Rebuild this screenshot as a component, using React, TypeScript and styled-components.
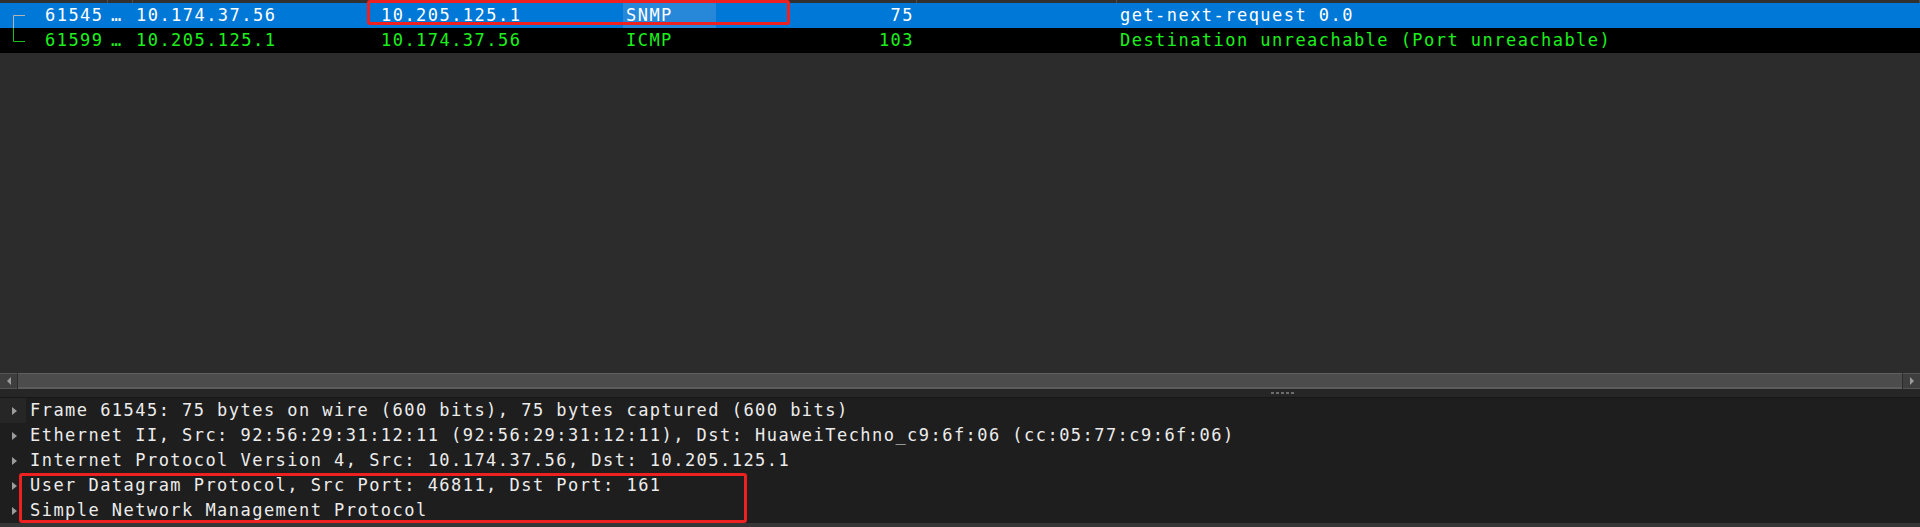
import React from "react";
import styled, { createGlobalStyle } from "styled-components";

const Global = createGlobalStyle`
  html, body { margin: 0; padding: 0; background: #2c2c2c; overflow: hidden; }
  #root { width: 1920px; height: 527px; }
`;

const MONO = `"DejaVu Sans Mono", "Liberation Mono", monospace`;
const COLS = "108px 25px 245px 245px 93px 201px 200px 1fr";

const Window = styled.div`
  position: relative;
  width: 1920px;
  height: 527px;
  display: flex;
  flex-direction: column;
  background: #2c2c2c;
  font-family: ${MONO};
  font-size: 17px;
  letter-spacing: 1.46px;
  overflow: hidden;
`;

const PacketList = styled.div`
  flex: 1;
  display: flex;
  flex-direction: column;
  min-height: 0;
`;

const HeaderStrip = styled.div`
  height: 3px;
  flex: none;
  display: grid;
  grid-template-columns: ${COLS};
  background: #303030;
`;

const HeaderCell = styled.div`
  border-right: 1px solid #4e4e4e;
`;

const PacketRow = styled.div<{ $selected?: boolean }>`
  height: 25px;
  flex: none;
  display: grid;
  grid-template-columns: ${COLS};
  background: ${(p) => (p.$selected ? "#0078d7" : "#000000")};
  color: ${(p) => (p.$selected ? "#ffffff" : "#1cf01c")};
  line-height: 25px;
`;

const Cell = styled.div<{ $right?: boolean; $hot?: boolean }>`
  overflow: hidden;
  white-space: nowrap;
  padding: 0 3px 0 3px;
  text-align: ${(p) => (p.$right ? "right" : "left")};
  background: ${(p) => (p.$hot ? "#2787d9" : "transparent")};
`;

const NoCell = styled.div`
  display: flex;
  align-items: stretch;
  padding-left: 12px;
  white-space: nowrap;
  overflow: hidden;
`;

const TreeGlyph = styled.svg`
  flex: none;
  width: 14px;
  height: 25px;
  margin-right: 19px;
`;

const EmptyArea = styled.div`
  flex: 1;
  background: #2c2c2c;
`;

const HScroll = styled.div`
  height: 16px;
  flex: none;
  display: flex;
  background: #2c2c2c;
`;

const ArrowButton = styled.div`
  width: 17px;
  flex: none;
  display: flex;
  align-items: center;
  justify-content: center;
  background: #3e3e3e;
  border-top: 1px solid #555555;
  border-bottom: 1px solid #555555;
`;

const Arrow = styled.span<{ $dir: "left" | "right" }>`
  width: 0;
  height: 0;
  border-top: 4px solid transparent;
  border-bottom: 4px solid transparent;
  ${(p) =>
    p.$dir === "left"
      ? "border-right: 4px solid #9a9a9a;"
      : "border-left: 4px solid #9a9a9a;"}
`;

const Thumb = styled.div`
  flex: 1;
  margin: 0 1px;
  background: #4c4c4c;
  border-top: 1px solid #606060;
  border-bottom: 2px solid #5c5c5c;
`;

const Splitter = styled.div`
  height: 8px;
  flex: none;
  display: flex;
  align-items: center;
  background: #262626;
  border-bottom: 1px solid #171717;
`;

const Grip = styled.div`
  margin-left: 1271px;
  display: flex;
  gap: 2px;
`;

const GripDot = styled.span`
  width: 3px;
  height: 2px;
  background: #6c6c6c;
`;

const DetailPane = styled.div`
  height: 125px;
  flex: none;
  display: flex;
  flex-direction: column;
  background: #1e1e1e;
  color: #ececec;
`;

const TreeRow = styled.div`
  height: 25px;
  display: flex;
  align-items: stretch;
  line-height: 25px;
  white-space: nowrap;
`;

const Gutter = styled.div<{ $hover?: boolean }>`
  width: 26px;
  flex: none;
  display: flex;
  align-items: center;
  background: ${(p) => (p.$hover ? "#262626" : "transparent")};
`;

const Expander = styled.span`
  margin-left: 12px;
  width: 0;
  height: 0;
  border-left: 5px solid #9c9c9c;
  border-top: 4px solid transparent;
  border-bottom: 4px solid transparent;
`;

const TreeText = styled.span`
  padding-left: 4px;
`;

const BottomStrip = styled.div`
  height: 4px;
  flex: none;
  background: #363636;
`;

const Annotation = styled.div`
  position: absolute;
  box-sizing: border-box;
  border: 3px solid #ee2020;
  border-radius: 3px;
  pointer-events: none;
`;

const TopMark = styled(Annotation)`
  left: 367px;
  top: 0px;
  width: 423px;
  height: 25px;
`;

const BottomMark = styled(Annotation)`
  left: 19px;
  top: 473px;
  width: 728px;
  height: 50px;
`;

type Packet = {
  no: string;
  src: string;
  dst: string;
  proto: string;
  len: string;
  info: string;
  selected?: boolean;
};

const packets: Packet[] = [
  {
    no: "61545",
    src: "10.174.37.56",
    dst: "10.205.125.1",
    proto: "SNMP",
    len: "75",
    info: "get-next-request 0.0",
    selected: true,
  },
  {
    no: "61599",
    src: "10.205.125.1",
    dst: "10.174.37.56",
    proto: "ICMP",
    len: "103",
    info: "Destination unreachable (Port unreachable)",
  },
];

const details = [
  "Frame 61545: 75 bytes on wire (600 bits), 75 bytes captured (600 bits)",
  "Ethernet II, Src: 92:56:29:31:12:11 (92:56:29:31:12:11), Dst: HuaweiTechno_c9:6f:06 (cc:05:77:c9:6f:06)",
  "Internet Protocol Version 4, Src: 10.174.37.56, Dst: 10.205.125.1",
  "User Datagram Protocol, Src Port: 46811, Dst Port: 161",
  "Simple Network Management Protocol",
];

function Tree({ first }: { first: boolean }) {
  return first ? (
    <TreeGlyph viewBox="0 0 14 25">
      <path d="M1.5 25 V12.5 H13" fill="none" stroke="#b4b4b4" strokeWidth="1" />
    </TreeGlyph>
  ) : (
    <TreeGlyph viewBox="0 0 14 25">
      <path d="M1.5 0 V13.5 H13" fill="none" stroke="#1cc01c" strokeWidth="1" />
    </TreeGlyph>
  );
}

export default function App() {
  return (
    <Window>
      <Global />
      <PacketList>
        <HeaderStrip>
          {Array.from({ length: 8 }).map((_, i) => (
            <HeaderCell key={i} />
          ))}
        </HeaderStrip>
        {packets.map((p, i) => (
          <PacketRow key={p.no} $selected={p.selected}>
            <NoCell>
              <Tree first={i === 0} />
              {p.no}
            </NoCell>
            <Cell>…</Cell>
            <Cell>{p.src}</Cell>
            <Cell>{p.dst}</Cell>
            <Cell $hot={p.selected}>{p.proto}</Cell>
            <Cell $right>{p.len}</Cell>
            <Cell />
            <Cell>{p.info}</Cell>
          </PacketRow>
        ))}
        <EmptyArea />
        <HScroll>
          <ArrowButton>
            <Arrow $dir="left" />
          </ArrowButton>
          <Thumb />
          <ArrowButton>
            <Arrow $dir="right" />
          </ArrowButton>
        </HScroll>
      </PacketList>
      <Splitter>
        <Grip>
          {Array.from({ length: 5 }).map((_, i) => (
            <GripDot key={i} />
          ))}
        </Grip>
      </Splitter>
      <DetailPane>
        {details.map((d, i) => (
          <TreeRow key={i}>
            <Gutter $hover={i === 0}>
              <Expander />
            </Gutter>
            <TreeText>{d}</TreeText>
          </TreeRow>
        ))}
      </DetailPane>
      <BottomStrip />
      <TopMark />
      <BottomMark />
    </Window>
  );
}
